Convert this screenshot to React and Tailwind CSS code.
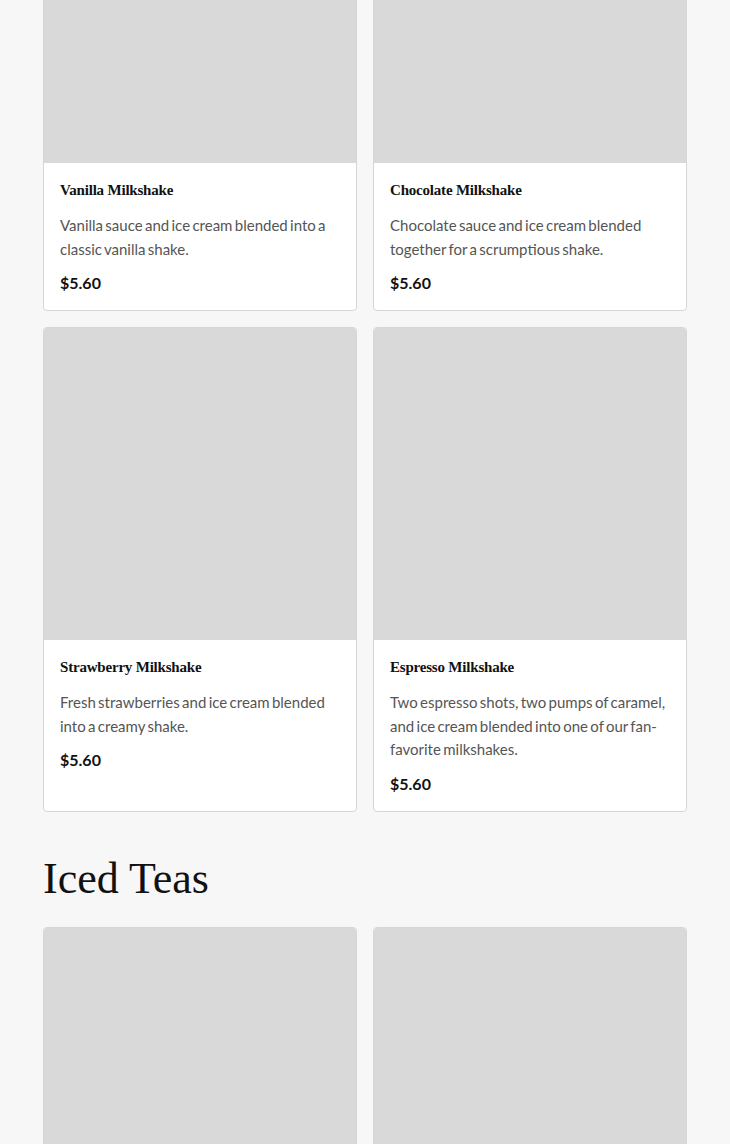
import React from 'react';

const milkshakes = [
  { name: 'Vanilla Milkshake', desc: 'Vanilla sauce and ice cream blended into a classic vanilla shake.', price: '$5.60' },
  { name: 'Chocolate Milkshake', desc: 'Chocolate sauce and ice cream blended together for a scrumptious shake.', price: '$5.60' },
  { name: 'Strawberry Milkshake', desc: 'Fresh strawberries and ice cream blended into a creamy shake.', price: '$5.60' },
  { name: 'Espresso Milkshake', desc: 'Two espresso shots, two pumps of caramel, and ice cream blended into one of our fan-favorite milkshakes.', price: '$5.60' },
];

const icedTeas = [
  { name: 'Peach Iced Tea', desc: 'Black tea with peach.', price: '$3.80' },
  { name: 'Lemon Iced Tea', desc: 'Black tea with lemon.', price: '$3.80' },
];

function MenuCard({ item }) {
  return (
    <div className="bg-white border border-[#d6d6d6] rounded-[4px] overflow-hidden flex flex-col">
      <div className="aspect-square bg-[#d9d9d9]" />
      <div className="px-4 pt-[17px] pb-[17px]">
        <h3 className="font-['Liberation_Serif',serif] font-bold text-[15px] leading-[20px] tracking-[-0.2px] text-[#111]">{item.name}</h3>
        <p className="mt-[14px] font-['Lato',sans-serif] text-[15px] leading-[23.5px] [word-spacing:-1.5px] text-[#555]">{item.desc}</p>
        <div className="mt-[12px] font-['Lato',sans-serif] font-bold text-[16px] leading-[20px] text-[#111]">{item.price}</div>
      </div>
    </div>
  );
}

export default function App() {
  return (
    <div className="min-h-screen bg-[#f7f7f7] px-[43px] overflow-hidden">
      {/* Milkshakes */}
      <div className="-mt-[150px] grid grid-cols-2 gap-4">
        {milkshakes.map(item => <MenuCard key={item.name} item={item} />)}
      </div>

      {/* Iced Teas */}
      <h2 className="mt-[40px] mb-[21px] font-['Liberation_Serif',serif] text-[44px] leading-[54px] text-[#111]">Iced Teas</h2>
      <div className="grid grid-cols-2 gap-4 pb-12">
        {icedTeas.map(item => <MenuCard key={item.name} item={item} />)}
      </div>
    </div>
  );
}
